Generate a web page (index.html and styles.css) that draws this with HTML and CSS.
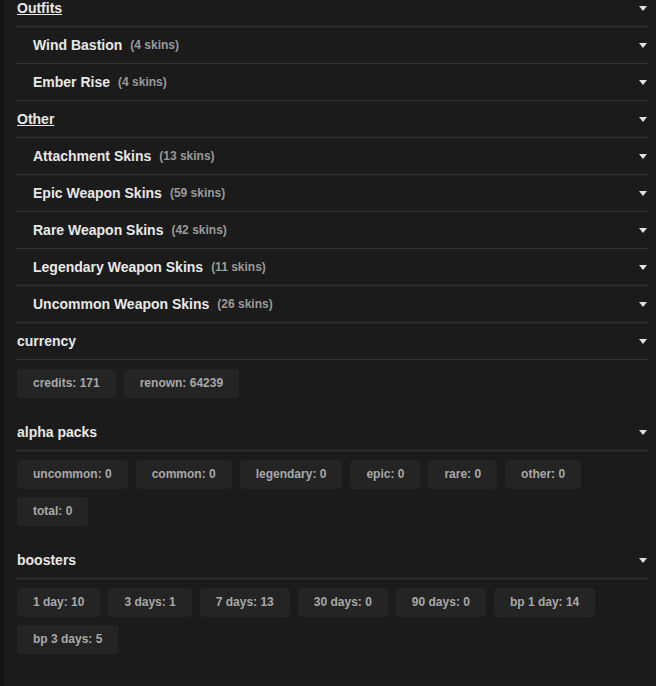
FILE: index.html
```html
<!DOCTYPE html>
<html lang="en">
<head>
  <meta charset="UTF-8">
  <meta name="viewport" content="width=device-width, initial-scale=1">
  <title>Inventory</title>
  <link rel="stylesheet" href="styles.css">
</head>
<body>
  <div class="page">
    <div class="inventory">

      <div class="row group"><span class="title link">Outfits</span><span class="arrow"></span></div>
      <div class="row item"><span class="title">Wind Bastion</span><span class="count">(4 skins)</span><span class="arrow"></span></div>
      <div class="row item"><span class="title">Ember Rise</span><span class="count">(4 skins)</span><span class="arrow"></span></div>

      <div class="row group"><span class="title link">Other</span><span class="arrow"></span></div>
      <div class="row item"><span class="title">Attachment Skins</span><span class="count">(13 skins)</span><span class="arrow"></span></div>
      <div class="row item"><span class="title">Epic Weapon Skins</span><span class="count">(59 skins)</span><span class="arrow"></span></div>
      <div class="row item"><span class="title">Rare Weapon Skins</span><span class="count">(42 skins)</span><span class="arrow"></span></div>
      <div class="row item"><span class="title">Legendary Weapon Skins</span><span class="count">(11 skins)</span><span class="arrow"></span></div>
      <div class="row item"><span class="title">Uncommon Weapon Skins</span><span class="count">(26 skins)</span><span class="arrow"></span></div>

      <!-- currency -->
      <div class="section">
        <div class="row group"><span class="title">currency</span><span class="arrow"></span></div>
        <div class="chips">
          <span class="chip">credits: 171</span>
          <span class="chip">renown: 64239</span>
        </div>
      </div>

      <!-- alpha packs -->
      <div class="section">
        <div class="row group"><span class="title">alpha packs</span><span class="arrow"></span></div>
        <div class="chips">
          <span class="chip">uncommon: 0</span>
          <span class="chip">common: 0</span>
          <span class="chip">legendary: 0</span>
          <span class="chip">epic: 0</span>
          <span class="chip">rare: 0</span>
          <span class="chip">other: 0</span>
          <span class="chip">total: 0</span>
        </div>
      </div>

      <!-- boosters -->
      <div class="section">
        <div class="row group"><span class="title">boosters</span><span class="arrow"></span></div>
        <div class="chips">
          <span class="chip">1 day: 10</span>
          <span class="chip">3 days: 1</span>
          <span class="chip">7 days: 13</span>
          <span class="chip">30 days: 0</span>
          <span class="chip">90 days: 0</span>
          <span class="chip">bp 1 day: 14</span>
          <span class="chip">bp 3 days: 5</span>
        </div>
      </div>

    </div>
  </div>
</body>
</html>
```

FILE: styles.css
```css
html, body {
  margin: 0;
  height: 100%;
  overflow: hidden;
}
body {
  font-family: "Liberation Sans", Arial, sans-serif;
  color: #e6e6e6;
  background: linear-gradient(to right, #141414 4px, #1b1b1b 4px);
}
.page {
  padding: 0 8px 0 16px;
}
.inventory {
  margin-top: -10px;
}
.row {
  display: flex;
  align-items: center;
  height: 36px;
  border-bottom: 1px solid #333;
  font-size: 14px;
  font-weight: bold;
}
.group {
  padding-left: 1px;
}
.item {
  padding-left: 17px;
}
.title {
  color: #e8e8e8;
}
.link {
  text-decoration: underline;
}
.count {
  margin-left: 8px;
  font-size: 12px;
  color: #9a9a9a;
}
.arrow {
  margin-left: auto;
  margin-right: 1px;
  width: 0;
  height: 0;
  border-left: 4px solid transparent;
  border-right: 4px solid transparent;
  border-top: 5px solid #e0e0e0;
}
.section {
  margin-bottom: 16px;
}
.chips {
  display: flex;
  flex-wrap: wrap;
  gap: 8px;
  margin-top: 9px;
  padding-left: 1px;
}
.chip {
  background: #242424;
  border-radius: 4px;
  padding: 7px 16px;
  line-height: 15px;
  font-size: 12px;
  font-weight: bold;
  color: #a8a8a8;
}
```
